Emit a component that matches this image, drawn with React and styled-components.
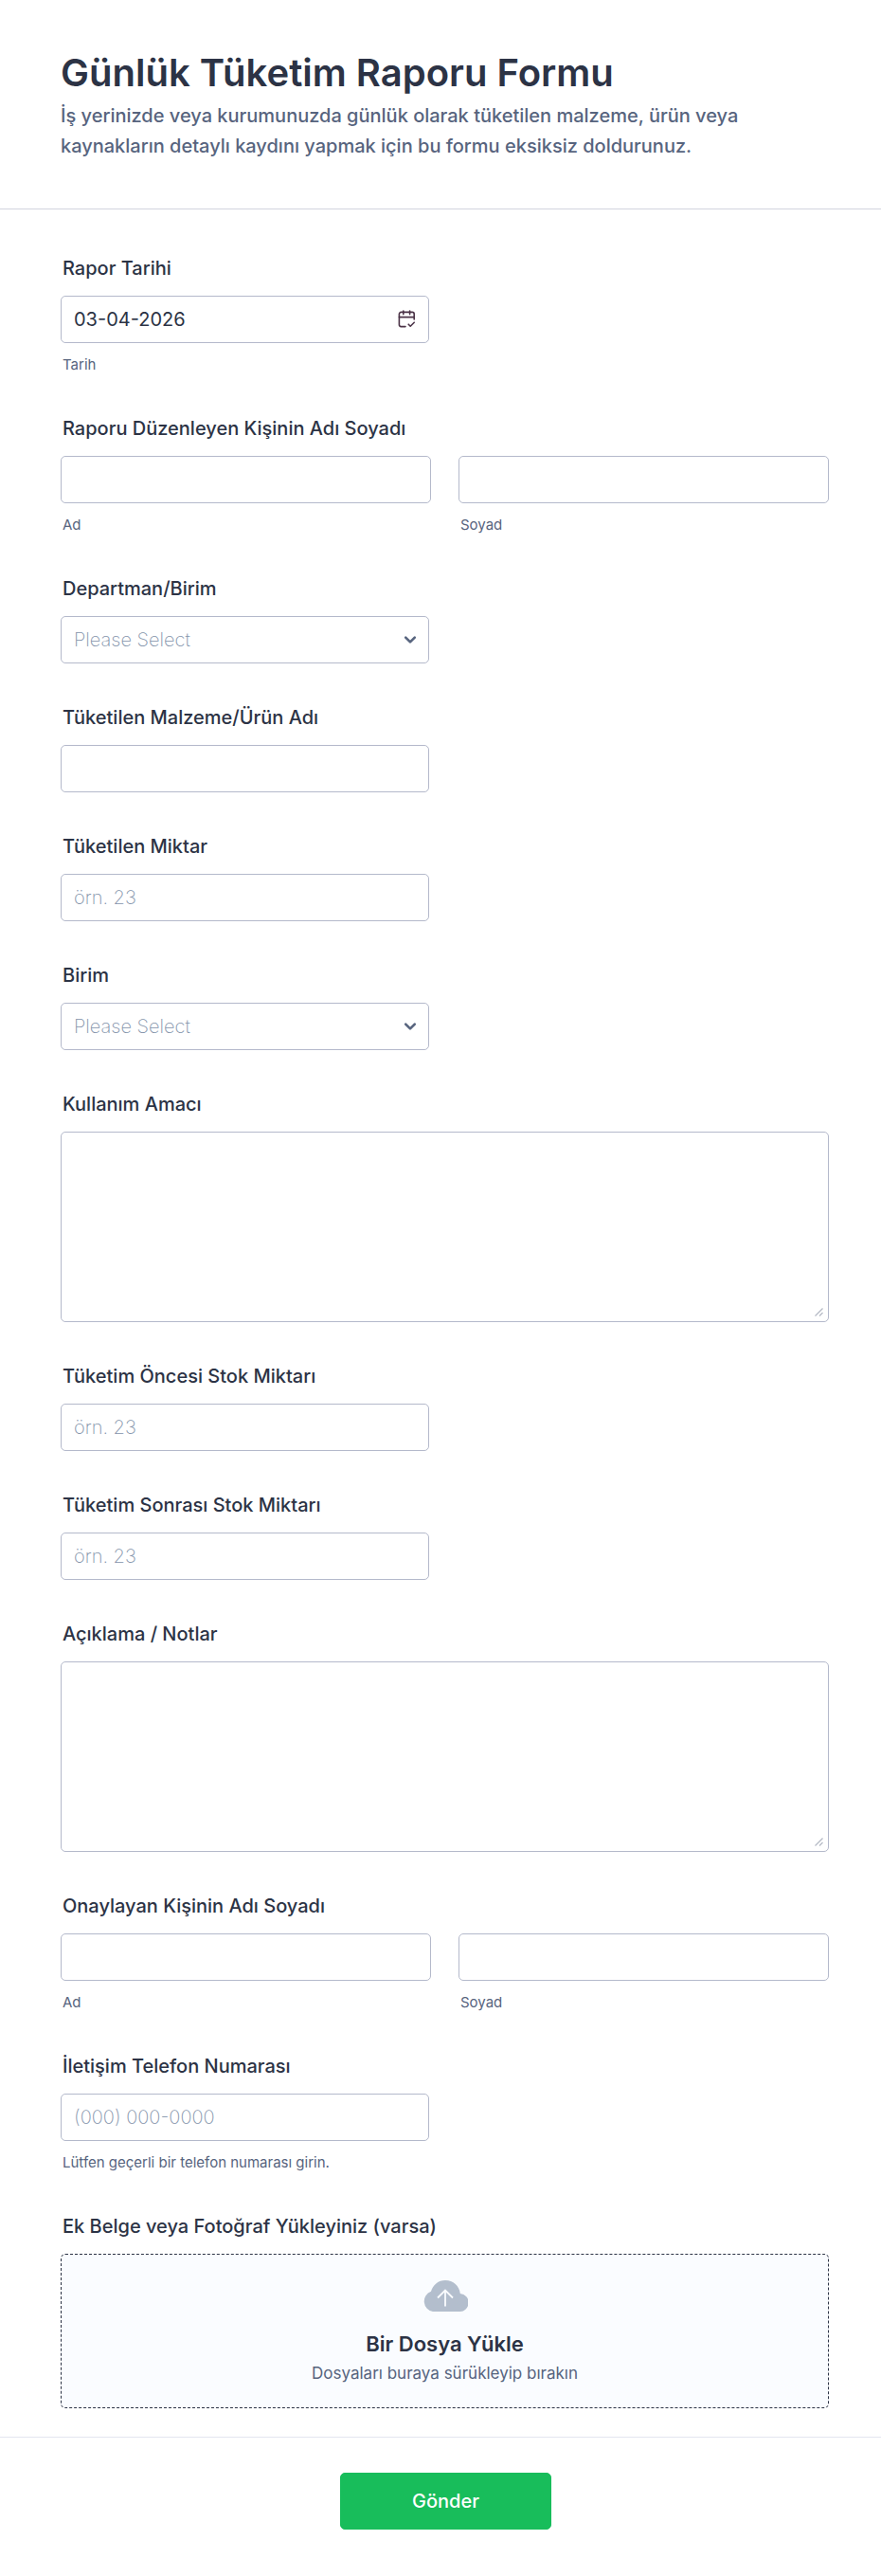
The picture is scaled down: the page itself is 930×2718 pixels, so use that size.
import React from "react";
import styled, { createGlobalStyle } from "styled-components";

const GlobalStyle = createGlobalStyle`
    * {
        box-sizing: border-box;
    }
    body {
        margin: 0;
        background: #fff;
        color: #2c3345;
        font-family: Inter, "Liberation Sans", sans-serif;
    }
    input, select, textarea, button {
        font-family: inherit;
    }
`;

const Header = styled.header`
    padding: 53px 64px 50px;
    border-bottom: 1px solid #d2d4df;
`;

const Title = styled.h1`
    margin: 0;
    font-size: 40px;
    line-height: 48px;
    font-weight: 600;
`;

const Subtitle = styled.p`
    margin: 5px 0 0;
    max-width: 750px;
    font-size: 20px;
    line-height: 32px;
    font-weight: 500;
    color: #57647e;
`;

const Fields = styled.div`
    display: flex;
    flex-direction: column;
    gap: 45px;
    padding: 50px 55px 30px 64px;
`;

const Group = styled.div`
    display: flex;
    flex-direction: column;
    min-width: 0;
`;

const Label = styled.label`
    margin: 0 2px 16px;
    font-size: 20px;
    line-height: 25px;
    font-weight: 500;
`;

const SubLabel = styled.label`
    margin: 13px 2px 0;
    font-size: 15px;
    line-height: 20px;
    color: #57647e;
`;

const Half = styled.div`
    position: relative;
    width: 48%;
`;

const control = `
    display: block;
    width: 100%;
    border: 1px solid #b4b9cb;
    border-radius: 5px;
    background: #fff;
    color: #2c3345;
    font-size: 20px;
    padding: 0 13px;
    outline-color: #2e69ff;
`;

const Input = styled.input`
    ${control}
    height: 50px;
    &::placeholder {
        color: #8494ab;
        font-weight: 200;
        opacity: 1;
    }
`;

const Select = styled.select`
    ${control}
    height: 50px;
    appearance: none;
    color: #8494ab;
    font-weight: 200;
`;

const Area = styled.div`
    position: relative;
`;

const TextArea = styled.textarea`
    ${control}
    height: 201px;
    padding: 12px 13px;
    resize: none;
`;

const Grip = styled.svg`
    position: absolute;
    right: 6px;
    bottom: 6px;
    pointer-events: none;
`;

const Chevron = styled.svg`
    position: absolute;
    right: 13px;
    top: 18px;
    pointer-events: none;
`;

const IconButton = styled.button`
    position: absolute;
    right: 14px;
    top: 15px;
    display: flex;
    padding: 0;
    border: 0;
    background: none;
    color: #4b3347;
    cursor: pointer;
`;

const NameRow = styled.div`
    display: grid;
    grid-template-columns: 1fr 1fr;
    gap: 29px;
`;

const DropZone = styled.button`
    display: flex;
    flex-direction: column;
    align-items: center;
    padding: 27px 20px 24px;
    border: 1px dashed #2c3345;
    border-radius: 5px;
    background: #fafcff;
    color: #2c3345;
    cursor: pointer;
`;

const DropTitle = styled.span`
    margin-top: 20px;
    font-size: 22px;
    line-height: 28px;
    font-weight: 600;
`;

const DropText = styled.span`
    margin-top: 5px;
    font-size: 17px;
    line-height: 24px;
    color: #57647e;
`;

const Footer = styled.footer`
    display: flex;
    justify-content: center;
    padding: 37px 0 49px 11px;
    border-top: 1px solid #e3e5f0;
`;

const Submit = styled.button`
    min-width: 223px;
    height: 60px;
    border: 1px solid #18bd5b;
    border-radius: 5px;
    background: #18bd5b;
    color: #fff;
    font-size: 20px;
    font-weight: 500;
    cursor: pointer;
`;

const CalendarIcon = () => (
    <svg width="19" height="19" viewBox="0 0 19 19" fill="none" stroke="currentColor"
         strokeWidth="1.6" strokeLinecap="round" strokeLinejoin="round">
        <path d="M8 17.6H3.4a2 2 0 0 1-2-2V4.4a2 2 0 0 1 2-2h11.8a2 2 0 0 1 2 2V10" />
        <path d="M1.4 7.6h15.8M5.8 1v3.6M12.6 1v3.6M11.2 15.2l2 2 4-4" />
    </svg>
)

const CloudIcon = () => (
    <svg width="48" height="33" viewBox="0 0 48 33" fill="none">
        <path d="M11 33A11 11 0 0 1 9 11.8C11 4.6 17 0 24 0c8.5 0 15 6 15.8 14A9.5 9.5 0 0 1 38.5 33Z" fill="#b3becd" />
        <path d="M24 27.5V10.5M16 18.5l8-8 8 8" stroke="#fafcff" strokeWidth="1.8" />
    </svg>
)

const TextField = ({ id, label, sub, ...rest }) => (
    <Group>
        <Label htmlFor={id}>{label}</Label>
        <Half>
            <Input id={id} {...rest} />
        </Half>
        {sub && <SubLabel htmlFor={id}>{sub}</SubLabel>}
    </Group>
)

const SelectField = ({ id, label, options }) => (
    <Group>
        <Label htmlFor={id}>{label}</Label>
        <Half>
            <Select id={id} defaultValue="">
                <option value="">Please Select</option>
                {options.map(o => <option key={o}>{o}</option>)}
            </Select>
            <Chevron width="14" height="14" viewBox="0 0 14 14" fill="none" stroke="#57647e"
                     strokeWidth="2.6" strokeLinecap="round" strokeLinejoin="round">
                <path d="M2.2 4.6l4.8 4.8 4.8-4.8" />
            </Chevron>
        </Half>
    </Group>
)

const AreaField = ({ id, label }) => (
    <Group>
        <Label htmlFor={id}>{label}</Label>
        <Area>
            <TextArea id={id} />
            <Grip width="9" height="9" viewBox="0 0 9 9" stroke="#b4b9c4" strokeWidth="1.2">
                <path d="M0.5 8.5l8-8M5 8.5l3.5-3.5" />
            </Grip>
        </Area>
    </Group>
)

const NameField = ({ id, label }) => (
    <Group role="group" aria-labelledby={`${id}-label`}>
        <Label as="span" id={`${id}-label`}>{label}</Label>
        <NameRow>
            <Group>
                <Input id={`${id}-first`} />
                <SubLabel htmlFor={`${id}-first`}>Ad</SubLabel>
            </Group>
            <Group>
                <Input id={`${id}-last`} />
                <SubLabel htmlFor={`${id}-last`}>Soyad</SubLabel>
            </Group>
        </NameRow>
    </Group>
)

const App = () => (
    <>
        <GlobalStyle />
        <form onSubmit={e => e.preventDefault()}>
            <Header>
                <Title>Günlük Tüketim Raporu Formu</Title>
                <Subtitle>
                    İş yerinizde veya kurumunuzda günlük olarak tüketilen malzeme, ürün veya
                    kaynakların detaylı kaydını yapmak için bu formu eksiksiz doldurunuz.
                </Subtitle>
            </Header>
            <Fields>
                <Group>
                    <Label htmlFor="date">Rapor Tarihi</Label>
                    <Half>
                        <Input id="date" defaultValue="03-04-2026" />
                        <IconButton type="button" aria-label="Tarih"><CalendarIcon /></IconButton>
                    </Half>
                    <SubLabel htmlFor="date">Tarih</SubLabel>
                </Group>
                <NameField id="reporter" label="Raporu Düzenleyen Kişinin Adı Soyadı" />
                <SelectField id="department" label="Departman/Birim" options={["Üretim", "Depo", "İdari"]} />
                <TextField id="material" label="Tüketilen Malzeme/Ürün Adı" />
                <TextField id="amount" label="Tüketilen Miktar" placeholder="örn. 23" />
                <SelectField id="unit" label="Birim" options={["Adet", "Kg", "Litre"]} />
                <AreaField id="purpose" label="Kullanım Amacı" />
                <TextField id="before" label="Tüketim Öncesi Stok Miktarı" placeholder="örn. 23" />
                <TextField id="after" label="Tüketim Sonrası Stok Miktarı" placeholder="örn. 23" />
                <AreaField id="notes" label="Açıklama / Notlar" />
                <NameField id="approver" label="Onaylayan Kişinin Adı Soyadı" />
                <TextField id="phone" type="tel" label="İletişim Telefon Numarası"
                           placeholder="(000) 000-0000" sub="Lütfen geçerli bir telefon numarası girin." />
                <Group>
                    <Label htmlFor="upload">Ek Belge veya Fotoğraf Yükleyiniz (varsa)</Label>
                    <DropZone id="upload" type="button">
                        <CloudIcon />
                        <DropTitle>Bir Dosya Yükle</DropTitle>
                        <DropText>Dosyaları buraya sürükleyip bırakın</DropText>
                    </DropZone>
                </Group>
            </Fields>
            <Footer>
                <Submit type="submit">Gönder</Submit>
            </Footer>
        </form>
    </>
)

export default App;
